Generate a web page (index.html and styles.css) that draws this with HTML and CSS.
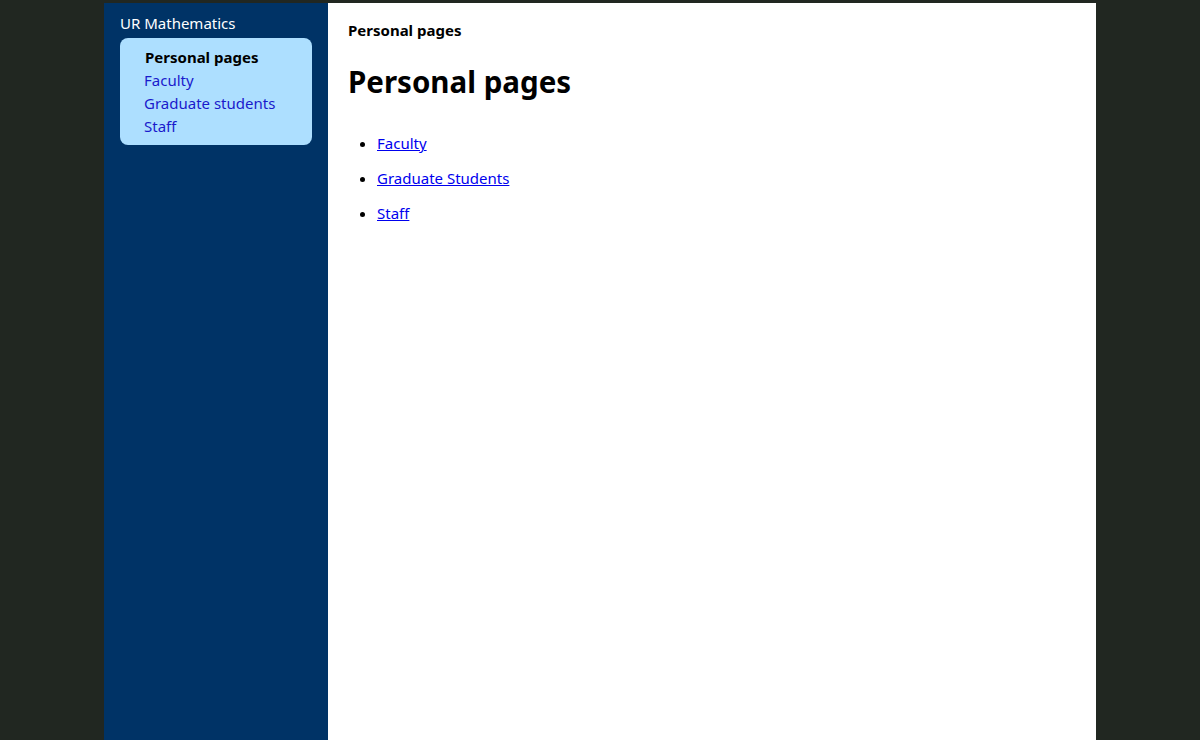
FILE: index.html
```html
<!DOCTYPE html>
<html lang="en">
<head>
<meta charset="utf-8">
<title>Personal pages</title>
<link rel="stylesheet" href="styles.css">
</head>
<body>
<div class="page">
  <nav class="sidebar">
    <div class="site-title">UR Mathematics</div>
    <div class="menu">
      <div class="menu-current">Personal pages</div>
      <a class="menu-link" href="#">Faculty</a>
      <a class="menu-link" href="#">Graduate students</a>
      <a class="menu-link" href="#">Staff</a>
    </div>
  </nav>
  <main class="content">
    <div class="breadcrumb">Personal pages</div>
    <h1 class="title">Personal pages</h1>
    <ul class="links">
      <li><a href="#">Faculty</a></li>
      <li><a href="#">Graduate Students</a></li>
      <li><a href="#">Staff</a></li>
    </ul>
  </main>
</div>
</body>
</html>
```
FILE: styles.css
```css
html, body {
  margin: 0;
  padding: 0;
  height: 100%;
}
body {
  background: #212721;
  font-family: "Noto Sans", "Open Sans", sans-serif;
  font-size: 15px;
  line-height: 22px;
  color: #000;
  padding-top: 3px;
  box-sizing: border-box;
}
.page {
  width: 992px;
  margin: 0 auto;
  display: flex;
  min-height: 737px;
}
.sidebar {
  width: 224px;
  flex: none;
  background: #003366;
  padding: 9px 16px 16px;
  box-sizing: border-box;
}
.site-title {
  color: #fff;
  margin-bottom: 4px;
}
.menu {
  background: #addfff;
  border-radius: 8px;
  padding: 8px 16px 7px 24px;
  display: flex;
  flex-direction: column;
  line-height: 23px;
}
.menu-current {
  font-weight: bold;
  padding-left: 1px;
}
.menu-link {
  color: #1a1acc;
  text-decoration: none;
}
.content {
  flex: 1;
  background: #fff;
  padding: 16px 20px 20px;
}
.breadcrumb {
  font-weight: bold;
}
.title {
  font-size: 29.5px;
  line-height: 40px;
  margin: 21px 0 21px;
}
.links {
  margin: 30px 0 0;
  padding-left: 29px;
}
.links li {
  margin-bottom: 13px;
}
.links a {
  color: #0000ee;
}
```
